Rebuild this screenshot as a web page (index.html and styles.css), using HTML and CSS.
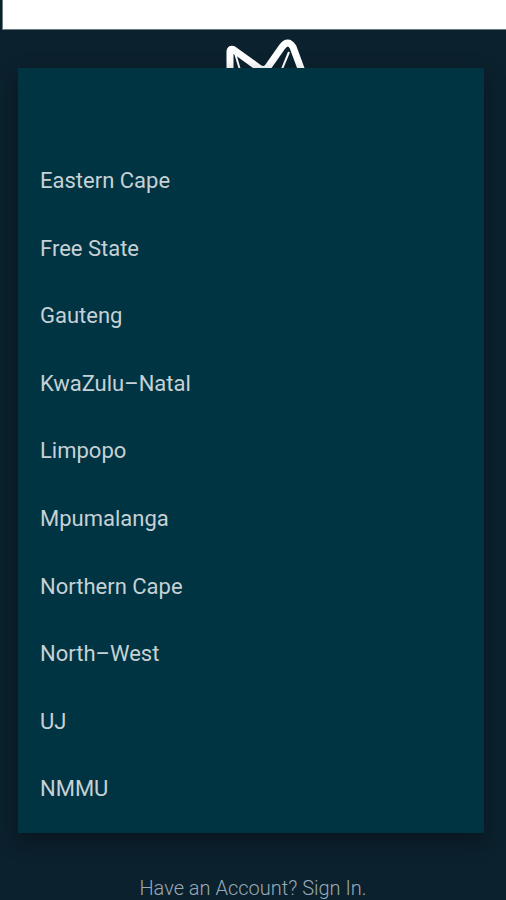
FILE: index.html
```html
<!DOCTYPE html>
<html lang="en">
<head>
<meta charset="utf-8">
<meta name="viewport" content="width=device-width, initial-scale=1">
<title>Sign up</title>
<link rel="stylesheet" href="styles.css">
</head>
<body>
<div class="status-bar"></div>
<header class="header">
  <svg class="logo" viewBox="0 0 84 30" aria-hidden="true">
    <path class="logo-main" d="M9 36V14Q9 10 13 12L38 30Q43 34 47 29L61 9Q67 1 72 9L82 36"/>
    <path class="logo-thin" d="M14 15L19 32M68 14L61 31"/>
  </svg>
</header>
<main class="menu">
  <ul class="options">
    <li><button class="option" type="button" aria-label="None"></button></li>
    <li><button class="option" type="button">Eastern Cape</button></li>
    <li><button class="option" type="button">Free State</button></li>
    <li><button class="option" type="button">Gauteng</button></li>
    <li><button class="option" type="button">KwaZulu–Natal</button></li>
    <li><button class="option" type="button">Limpopo</button></li>
    <li><button class="option" type="button">Mpumalanga</button></li>
    <li><button class="option" type="button">Northern Cape</button></li>
    <li><button class="option" type="button">North–West</button></li>
    <li><button class="option" type="button">UJ</button></li>
    <li><button class="option" type="button">NMMU</button></li>
  </ul>
</main>
<footer class="footer"><a class="sign-in" href="#">Have an Account? Sign In.</a></footer>
</body>
</html>
```
FILE: styles.css
```css
* {
  box-sizing: border-box;
}

body {
  margin: 0;
  min-height: 100vh;
  display: flex;
  flex-direction: column;
  background: #0b212d;
  font-family: Roboto, "Liberation Sans", sans-serif;
  font-weight: 400;
}

.status-bar {
  height: 30px;
  margin-left: 2px;
  background: #fff;
  border-bottom: 1px solid #6c7b82;
  border-left: 1px solid #6c7b82;
}

.header {
  display: flex;
  justify-content: center;
  height: 38px;
  padding-top: 8px;
}

.logo {
  width: 84px;
  height: 30px;
  margin-left: 20px;
  fill: none;
  stroke: #fff;
  stroke-linejoin: round;
}

.logo-main {
  stroke-width: 7;
}

.logo-thin {
  stroke-width: 2;
}

.menu {
  flex: 1;
  display: flex;
  margin: 0 22px 0 18px;
  padding: 12px 0 10px;
  background: #003443;
  box-shadow: 0 8px 16px rgba(10, 15, 25, 0.6);
}

.options {
  flex: 1;
  display: grid;
  grid-auto-rows: 1fr;
  margin: 0;
  padding: 0;
  list-style: none;
}

.option {
  display: block;
  width: 100%;
  height: 100%;
  padding: 0 22px;
  border: 0;
  background: none;
  color: #c6d1d5;
  font: inherit;
  font-size: 22px;
  line-height: 28px;
  text-align: left;
}

.footer {
  height: 67px;
  padding-top: 43px;
  text-align: center;
}

.sign-in {
  color: #9aa9b5;
  font-size: 20px;
  font-weight: 300;
  line-height: 24px;
  text-decoration: none;
}
```
